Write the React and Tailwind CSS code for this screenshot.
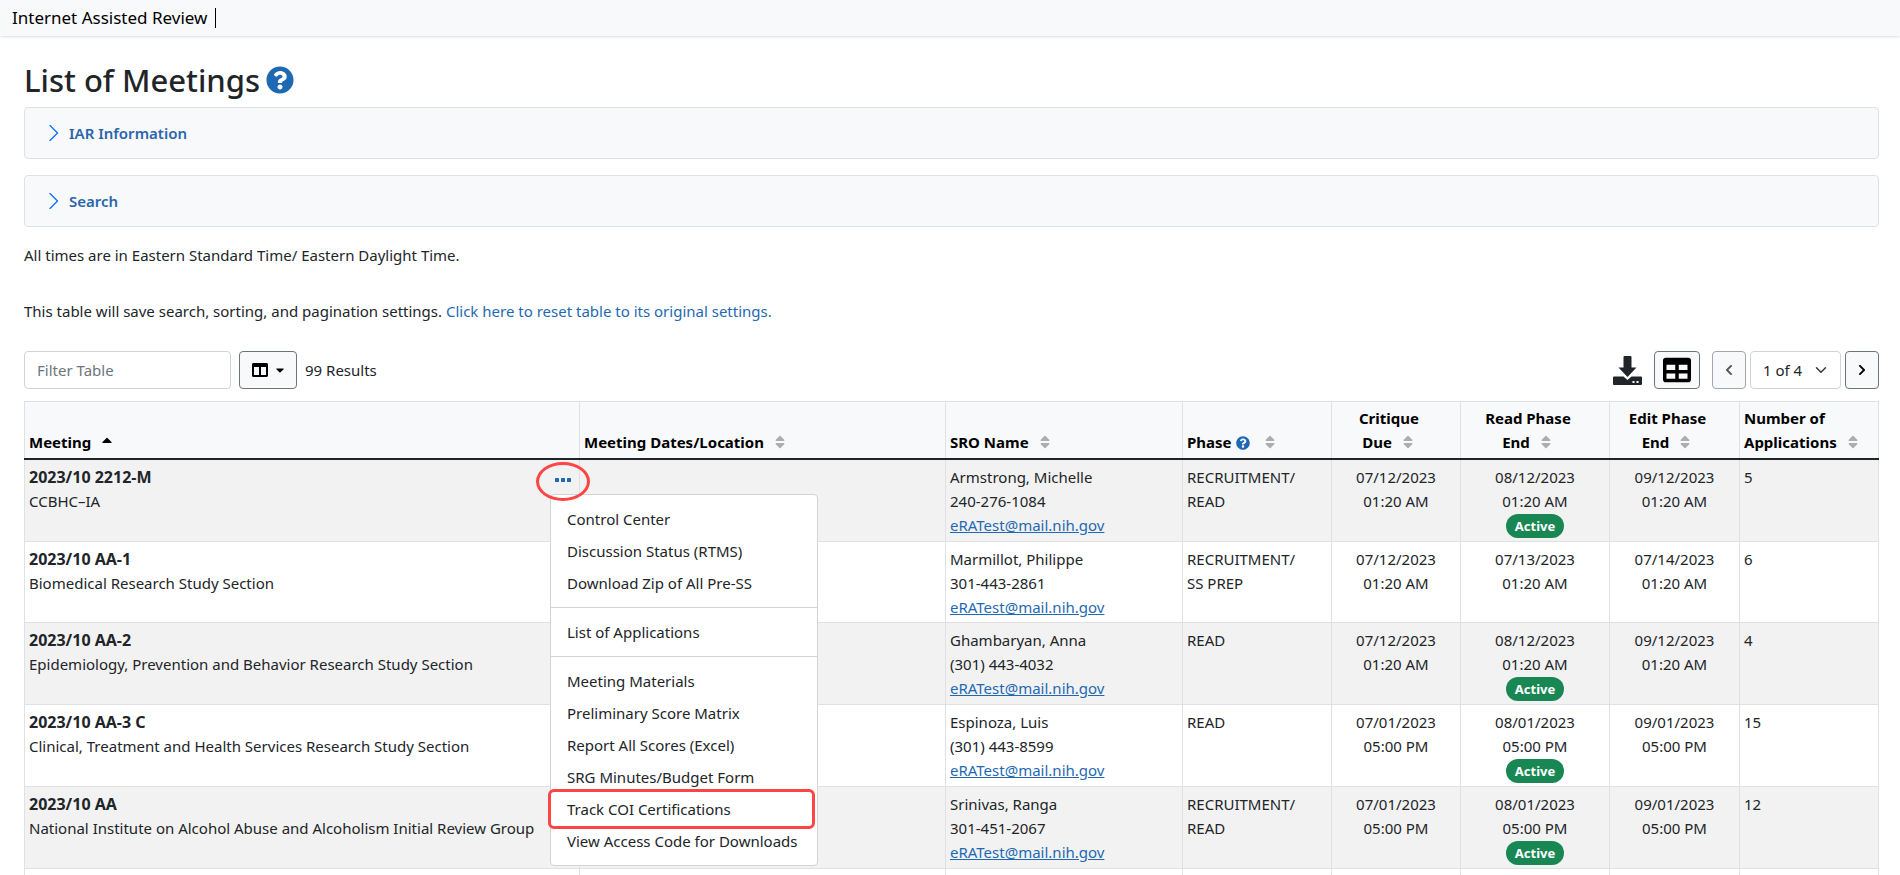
import React, { useState } from 'react';
import {
  FaCaretDown,
  FaCaretUp,
  FaChevronLeft,
  FaChevronRight,
  FaColumns,
  FaQuestionCircle,
  FaSort,
  FaTable
} from 'react-icons/fa';

const EMAIL = 'eRATest@mail.nih.gov';

const meetings = [
  {
    id: '2023/10 2212-M',
    name: 'CCBHC–IA',
    sro: 'Armstrong, Michelle',
    phone: '240-276-1084',
    phase: ['RECRUITMENT/', 'READ'],
    critique: ['07/12/2023', '01:20 AM'],
    read: ['08/12/2023', '01:20 AM'],
    edit: ['09/12/2023', '01:20 AM'],
    active: true,
    applications: 5
  },
  {
    id: '2023/10 AA-1',
    name: 'Biomedical Research Study Section',
    sro: 'Marmillot, Philippe',
    phone: '301-443-2861',
    phase: ['RECRUITMENT/', 'SS PREP'],
    critique: ['07/12/2023', '01:20 AM'],
    read: ['07/13/2023', '01:20 AM'],
    edit: ['07/14/2023', '01:20 AM'],
    active: false,
    applications: 6
  },
  {
    id: '2023/10 AA-2',
    name: 'Epidemiology, Prevention and Behavior Research Study Section',
    sro: 'Ghambaryan, Anna',
    phone: '(301) 443-4032',
    phase: ['READ'],
    critique: ['07/12/2023', '01:20 AM'],
    read: ['08/12/2023', '01:20 AM'],
    edit: ['09/12/2023', '01:20 AM'],
    active: true,
    applications: 4
  },
  {
    id: '2023/10 AA-3 C',
    name: 'Clinical, Treatment and Health Services Research Study Section',
    sro: 'Espinoza, Luis',
    phone: '(301) 443-8599',
    phase: ['READ'],
    critique: ['07/01/2023', '05:00 PM'],
    read: ['08/01/2023', '05:00 PM'],
    edit: ['09/01/2023', '05:00 PM'],
    active: true,
    applications: 15
  },
  {
    id: '2023/10 AA',
    name: 'National Institute on Alcohol Abuse and Alcoholism Initial Review Group',
    sro: 'Srinivas, Ranga',
    phone: '301-451-2067',
    phase: ['RECRUITMENT/', 'READ'],
    critique: ['07/01/2023', '05:00 PM'],
    read: ['08/01/2023', '05:00 PM'],
    edit: ['09/01/2023', '05:00 PM'],
    active: true,
    applications: 12
  }
];

const menuGroups = [
  ['Control Center', 'Discussion Status (RTMS)', 'Download Zip of All Pre-SS'],
  ['List of Applications'],
  [
    'Meeting Materials',
    'Preliminary Score Matrix',
    'Report All Scores (Excel)',
    'SRG Minutes/Budget Form',
    'Track COI Certifications',
    'View Access Code for Downloads'
  ]
];

const Panel = ({ title }) => (
  <section className="rounded border border-[#dee2e6] bg-[#f8f9fa]">
    <button type="button" className="flex h-[50px] w-full items-center gap-2 px-5 text-left font-semibold text-[#2b66ad]">
      <svg viewBox="0 0 16 16" className="size-4" fill="none" stroke="#0d6efd" strokeLinecap="round" strokeLinejoin="round">
        <path d="M5 0.5 L12.5 8 L5 15.5" strokeWidth="1.3" />
      </svg>
      {title}
    </button>
  </section>
);

const DownloadIcon = () => (
  <svg viewBox="0 0 29 29" className="size-[29px]" fill="currentColor">
    <path d="M11.5 0h6a1 1 0 0 1 1 1v10.500h5L14.500 21 5.500 11.500h5V1a1 1 0 0 1 1-1z" />
    <path
      fillRule="evenodd"
      d="M1 20.500h9.500l4 3.500 4-3.500H28a1 1 0 0 1 1 1v6.500a1 1 0 0 1-1 1H1a1 1 0 0 1-1-1v-6.500a1 1 0 0 1 1-1zM19.500 25v2h2v-2zM23.500 25v2h2v-2z"
    />
  </svg>
);

const SortIcon = () => <FaSort className="ml-2 inline-block size-4 align-[-2px] text-[#adadad]" />;

const HeaderCell = ({ children, center }) => (
  <th
    scope="col"
    className={`border-x border-[#dee2e6] py-1 pl-1 align-bottom font-bold ${center ? 'pr-[18px] text-center' : 'pr-1 text-left'}`}
  >
    {children}
  </th>
);

const Cell = ({ children, center }) => (
  <td className={`border border-[#dee2e6] px-1 pt-[5px] pb-[3px] align-top ${center ? 'text-center' : ''}`}>
    {children}
  </td>
);

const Lines = ({ items }) => items.map((item) => <div key={item}>{item}</div>);

const RowMenu = () => (
  <div className="relative">
    <button type="button" aria-label="Meeting actions" className="flex h-[30px] items-center px-1 text-[#1f69b3]">
      <svg viewBox="0 0 16 4" className="h-1 w-4" fill="currentColor">
        <rect x="0" y="0" width="4" height="4" rx="0.500" />
        <rect x="6" y="0" width="4" height="4" rx="0.500" />
        <rect x="12" y="0" width="4" height="4" rx="0.500" />
      </svg>
    </button>
    <ul className="absolute top-[29px] left-[-1px] z-10 w-[268px] rounded border border-[#d3d3d3] bg-white py-2">
      {menuGroups.map((group, index) => (
        <React.Fragment key={group[0]}>
          {index > 0 && <li role="separator" className="my-2 border-t border-[#d3d3d3]" />}
          {group.map((label) => (
            <li key={label} className="relative">
              <a href="#" className="block px-4 py-1 whitespace-nowrap">
                {label}
              </a>
              {label === 'Track COI Certifications' && (
                <span className="pointer-events-none absolute -inset-y-1 right-0.5 -left-[3px] rounded-md border-3 border-[#ff4444]" />
              )}
            </li>
          ))}
        </React.Fragment>
      ))}
    </ul>
    <span className="pointer-events-none absolute -top-[3px] -left-[15px] z-20 h-[39px] w-[54px] rounded-[50%] border-3 border-[#ff4444]" />
  </div>
);

const App = () => {
  const [page, setPage] = useState('1');

  return (
    <div className="h-screen overflow-hidden bg-white font-['Noto_Sans','Open_Sans',sans-serif] text-[15px] leading-6 text-[#212529]">
      <header className="flex h-9 items-center gap-2 bg-[#f8f9fa] px-3 shadow-sm">
        <span className="text-[17px] text-black">Internet Assisted Review</span>
        <span className="h-5 border-l border-black" />
      </header>

      <main className="pt-6 pr-[21px] pl-6">
        <h1 className="mb-2 flex h-[39px] items-center gap-1.5 text-[31px] font-medium">
          List of Meetings
          <FaQuestionCircle className="size-7 text-[#1f69b3]" />
        </h1>

        <div className="space-y-4">
          <Panel title="IAR Information" />
          <Panel title="Search" />
        </div>

        <p className="mt-4">All times are in Eastern Standard Time/ Eastern Daylight Time.</p>
        <p className="mt-8">
          This table will save search, sorting, and pagination settings.{' '}
          <a href="#" className="text-[#1f69b3]">
            Click here to reset table to its original settings.
          </a>
        </p>

        {/* Table toolbar */}
        <div className="mt-7 mb-3 flex items-center justify-between">
          <div className="flex items-center gap-2">
            <input
              type="text"
              aria-label="Filter Table"
              placeholder="Filter Table"
              className="h-[38px] w-[207px] rounded border border-[#ced4da] px-3 placeholder:text-[#6c757d]"
            />
            <button
              type="button"
              aria-label="Choose columns"
              className="flex h-[38px] w-[58px] items-center justify-center gap-2 rounded border border-[#6c757d] bg-[#f8f9fa] text-black"
            >
              <FaColumns className="size-4" />
              <FaCaretDown className="h-3.5 w-2" />
            </button>
            <span>99 Results</span>
          </div>

          <div className="flex items-center gap-1">
            <button type="button" aria-label="Download" className="mr-2">
              <DownloadIcon />
            </button>
            <button
              type="button"
              aria-label="Table view"
              className="mr-2 flex h-[38px] w-[46px] items-center justify-center rounded border border-[#6c757d] bg-[#f8f9fa] text-black"
            >
              <FaTable className="size-7" />
            </button>
            <button
              type="button"
              aria-label="Previous page"
              className="flex h-[38px] w-[34px] items-center justify-center rounded border border-[#a0a6ab] bg-[#f8f9fa] text-[#555555]"
            >
              <FaChevronLeft className="size-3" />
            </button>
            <div className="relative">
              <select
                aria-label="Page"
                value={page}
                onChange={(e) => setPage(e.target.value)}
                className="h-[38px] w-[91px] appearance-none rounded border border-[#ced4da] bg-white px-3"
              >
                <option value="1">1 of 4</option>
                <option value="2">2 of 4</option>
                <option value="3">3 of 4</option>
                <option value="4">4 of 4</option>
              </select>
              <svg
                viewBox="0 0 16 16"
                className="pointer-events-none absolute top-[13px] right-3.5 size-3"
                fill="none"
                stroke="#343a40"
                strokeWidth="2"
                strokeLinecap="round"
                strokeLinejoin="round"
              >
                <path d="m2 5 6 6 6-6" />
              </svg>
            </div>
            <button
              type="button"
              aria-label="Next page"
              className="flex h-[38px] w-[34px] items-center justify-center rounded border border-[#6c757d] bg-[#f8f9fa] text-black"
            >
              <FaChevronRight className="size-3" />
            </button>
          </div>
        </div>

        <table className="w-full table-fixed border-collapse border border-[#dee2e6]">
          <colgroup>
            <col />
            <col className="w-[366px]" />
            <col className="w-[237px]" />
            <col className="w-[149px]" />
            <col className="w-[129px]" />
            <col className="w-[149px]" />
            <col className="w-[130px]" />
            <col className="w-[139px]" />
          </colgroup>
          <thead className="border-b-2 border-b-[#212529] bg-[#f8f9fa] text-black">
            <tr>
              <HeaderCell>
                Meeting
                <FaCaretUp className="ml-2 inline-block size-4 align-[0px]" />
              </HeaderCell>
              <HeaderCell>
                Meeting Dates/Location
                <SortIcon />
              </HeaderCell>
              <HeaderCell>
                SRO Name
                <SortIcon />
              </HeaderCell>
              <HeaderCell>
                Phase
                <FaQuestionCircle className="mr-1 ml-1 inline-block size-3.5 align-[-2px] text-[#1f69b3]" />
                <SortIcon />
              </HeaderCell>
              <HeaderCell center>
                Critique
                <br />
                Due
                <SortIcon />
              </HeaderCell>
              <HeaderCell center>
                Read Phase
                <br />
                End
                <SortIcon />
              </HeaderCell>
              <HeaderCell center>
                Edit Phase
                <br />
                End
                <SortIcon />
              </HeaderCell>
              <HeaderCell>
                Number of
                <br />
                Applications
                <SortIcon />
              </HeaderCell>
            </tr>
          </thead>
          <tbody>
            {meetings.map((meeting, index) => (
              <tr key={meeting.id} className="odd:bg-[#f2f2f2]">
                <Cell>
                  <div className="flex h-12 justify-between">
                    <div className="whitespace-nowrap">
                      <div className="text-base font-bold">{meeting.id}</div>
                      <div>{meeting.name}</div>
                    </div>
                    {index === 0 && <RowMenu />}
                  </div>
                </Cell>
                <Cell />
                <Cell>
                  <div>{meeting.sro}</div>
                  <div>{meeting.phone}</div>
                  <a href={`mailto:${EMAIL}`} className="text-[#1f69b3] underline">
                    {EMAIL}
                  </a>
                </Cell>
                <Cell>
                  <Lines items={meeting.phase} />
                </Cell>
                <Cell center>
                  <Lines items={meeting.critique} />
                </Cell>
                <Cell center>
                  <Lines items={meeting.read} />
                  {meeting.active && (
                    <div className="flex h-[25px] items-center justify-center">
                      <span className="rounded-full bg-[#198754] px-[9px] text-[13px] font-bold text-white">Active</span>
                    </div>
                  )}
                </Cell>
                <Cell center>
                  <Lines items={meeting.edit} />
                </Cell>
                <Cell>{meeting.applications}</Cell>
              </tr>
            ))}
            <tr className="h-20">
              <Cell />
              <Cell />
              <Cell />
              <Cell />
              <Cell />
              <Cell />
              <Cell />
              <Cell />
            </tr>
          </tbody>
        </table>
      </main>
    </div>
  );
};

export default App;
